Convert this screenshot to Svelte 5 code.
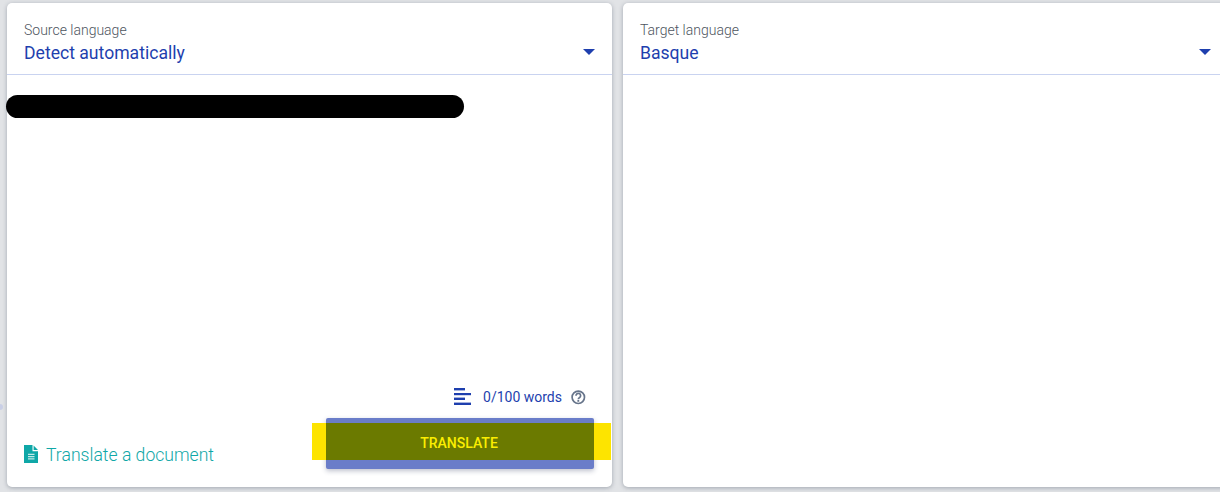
<script>
  const panels = [
    { label: 'Source language', value: 'Detect automatically', source: true },
    { label: 'Target language', value: 'Basque', source: false }
  ];
</script>

<main class="page">
  <span class="dot"></span>
  {#each panels as p}
    <section class="card">
      <header class="head">
        <div>
          <div class="label">{p.label}</div>
          <div class="value">{p.value}</div>
        </div>
        <svg class="caret" width="12" height="6" viewBox="0 0 12 6"><path d="M0 0h12L6 6z" fill="#1e3fae" /></svg>
      </header>
      {#if p.source}
        <div class="body">
          <div class="counter">
            <svg class="lines" width="17" height="17" viewBox="0 0 17 17" fill="#1e3fae">
              <rect x="0" y="0" width="11" height="2.400" />
              <rect x="0" y="5" width="17" height="2.200" />
              <rect x="0" y="9.600" width="11" height="2.400" />
              <rect x="0" y="14.600" width="17" height="2.400" />
            </svg>
            <span class="words">0/100 words</span>
            <svg class="help" width="15" height="15" viewBox="0 0 15 15">
              <circle cx="7.300" cy="7.300" r="6.200" fill="none" stroke="#66748a" stroke-width="1.700" />
              <path d="M5 5.700a2.300 2.300 0 1 1 3.600 1.800c-.8.500-1.300 1-1.300 1.700" fill="none" stroke="#66748a" stroke-width="1.700" />
              <rect x="6.400" y="10" width="1.800" height="1.800" fill="#66748a" />
            </svg>
          </div>
          <div class="actions">
            <a class="doc" href="#doc">
              <svg width="14" height="18" viewBox="0 0 14 18">
                <path d="M0 0h8.500v6.200H14V18H0z" fill="#0fa7a7" />
                <path d="M9.600 .6L14 5H9.600z" fill="#0fa7a7" />
                <path d="M4 9.300h6.500M4 11.600h6.500M4 13.900h6.500" stroke="#c4e9e8" stroke-width="1.300" />
              </svg>
              <span>Translate a document</span>
            </a>
            <button class="translate">
              <span class="highlight"></span>
              <span class="btn-text">TRANSLATE</span>
            </button>
          </div>
          <div class="redact"></div>
        </div>
      {/if}
    </section>
  {/each}
</main>

<style>
  :global(body) {
    margin: 0;
    background: #e1e3e6;
    overflow: hidden;
  }
  .page {
    position: relative;
    display: flex;
    gap: 11px;
    width: 1240px;
    height: 492px;
    box-sizing: border-box;
    padding: 3px 0 5px 7px;
    font-family: Roboto, "Liberation Sans", sans-serif;
  }
  .dot {
    position: absolute;
    left: -3px;
    top: 404px;
    width: 6px;
    height: 6px;
    border-radius: 50%;
    background: #c9cfe6;
  }
  .card {
    flex: 0 0 605px;
    display: flex;
    flex-direction: column;
    background: #fff;
    border-radius: 5px;
    box-shadow: 0 1px 4px rgba(60, 70, 90, 0.38);
  }
  .head {
    height: 72px;
    box-sizing: border-box;
    flex: none;
    display: flex;
    justify-content: space-between;
    align-items: flex-start;
    padding: 19px 17px 0;
    border-bottom: 1px solid #c9d3f0;
  }
  .label {
    font-size: 14px;
    line-height: 16px;
    font-weight: 300;
    color: #4e5560;
  }
  .value {
    font-size: 17.6px;
    line-height: 22px;
    margin-top: 4px;
    color: #1e3fae;
  }
  .caret {
    margin-top: 27px;
  }
  .body {
    position: relative;
    flex: 1;
    display: flex;
    flex-direction: column;
    justify-content: flex-end;
  }
  .counter {
    display: flex;
    align-items: center;
    justify-content: flex-end;
    height: 17px;
    padding-right: 26px;
    margin-bottom: 13px;
  }
  .help {
    margin-top: 1px;
  }
  .words {
    font-size: 14px;
    color: #1e3fae;
    margin: 0 9px 0 12px;
  }
  .actions {
    display: flex;
    justify-content: space-between;
    align-items: flex-end;
    padding: 0 18px 18px 17px;
  }
  .doc {
    display: flex;
    align-items: flex-end;
    gap: 8px;
    margin-bottom: 3px;
    font-size: 17.6px;
    line-height: 22px;
    font-weight: 300;
    color: #0fa7a7;
    text-decoration: none;
  }
  .doc svg {
    margin-bottom: 3px;
  }
  .translate {
    position: relative;
    width: 268px;
    height: 51px;
    padding: 0 2px 0 0;
    border: 0;
    border-radius: 2px;
    background: #6a7dc9;
    box-shadow: 0 2px 5px rgba(40, 50, 90, 0.3);
    font: 500 14px Roboto, "Liberation Sans", sans-serif;
  }
  .highlight {
    position: absolute;
    left: -14px;
    right: -17px;
    top: 5px;
    height: 37px;
    background: linear-gradient(to right, #fde400 14px, #6b7a00 14px, #6b7a00 282px, #fde400 282px);
  }
  .btn-text {
    position: relative;
    color: #fbee00;
    top: -1px;
  }
  .redact {
    position: absolute;
    left: -1px;
    top: 20px;
    width: 458px;
    height: 23px;
    border-radius: 12px;
    background: #000;
  }
</style>
